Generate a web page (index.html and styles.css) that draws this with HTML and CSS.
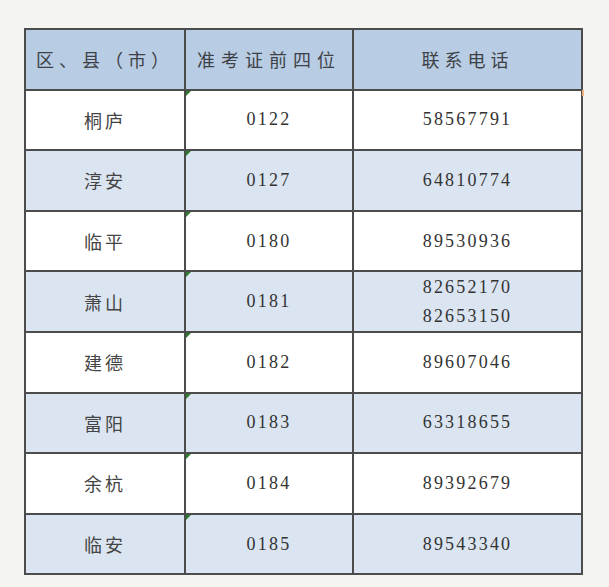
FILE: index.html
```html
<!DOCTYPE html>
<html lang="zh">
<head>
<meta charset="utf-8">
<link rel="stylesheet" href="styles.css">
</head>
<body>
<div class="page">
  <table class="grid">
    <colgroup><col class="c1"><col class="c2"><col class="c3"></colgroup>
    <thead>
      <tr class="head"><th>区、县（市）</th><th class="wide">准考证前四位</th><th>联系电话</th></tr>
    </thead>
    <tbody>
      <tr><td class="cn">桐庐</td><td class="num mark">0122</td><td class="num">58567791</td></tr>
      <tr class="alt"><td class="cn">淳安</td><td class="num mark">0127</td><td class="num">64810774</td></tr>
      <tr><td class="cn">临平</td><td class="num mark">0180</td><td class="num">89530936</td></tr>
      <tr class="alt"><td class="cn">萧山</td><td class="num mark">0181</td><td class="num two">82652170<br>82653150</td></tr>
      <tr><td class="cn">建德</td><td class="num mark">0182</td><td class="num">89607046</td></tr>
      <tr class="alt"><td class="cn">富阳</td><td class="num mark">0183</td><td class="num">63318655</td></tr>
      <tr><td class="cn">余杭</td><td class="num mark">0184</td><td class="num">89392679</td></tr>
      <tr class="alt"><td class="cn">临安</td><td class="num mark">0185</td><td class="num">89543340</td></tr>
    </tbody>
  </table>
  <span class="edge"></span>
</div>
</body>
</html>
```
FILE: styles.css
```css
html, body {
  margin: 0;
  padding: 0;
  background: #f3f3f1;
}
.page {
  position: relative;
  width: 609px;
  height: 587px;
  padding: 28px 0 0 24px;
  box-sizing: border-box;
  background: #f4f4f2;
}
.grid {
  border-collapse: collapse;
  width: 557px;
  table-layout: fixed;
  color: #3c3c3c;
}
.c1 { width: 160px; }
.c2 { width: 168px; }
.c3 { width: 229px; }
.grid th, .grid td {
  border: 2px solid #4c4c4c;
  text-align: center;
  vertical-align: middle;
  padding: 0;
  height: 58.6px;
}
.grid tbody tr { background: #ffffff; }
.grid tbody tr.alt { background: #dbe5f1; }
.head { background: #b8cce4; }
.grid th {
  font-family: "Noto Sans CJK SC", "Noto Sans", sans-serif;
  font-weight: 400;
  font-size: 18px;
  letter-spacing: 5px;
  color: #3e4246;
}
.grid th.wide { letter-spacing: 6px; }
.cn {
  font-family: "Noto Sans CJK SC", "Noto Sans", sans-serif;
  font-size: 18px;
  letter-spacing: 3px;
  color: #444;
}
.num {
  font-family: "Liberation Serif", "Times New Roman", serif;
  font-size: 18px;
  letter-spacing: 2.2px;
  color: #333;
}
.two { line-height: 29px; }
.mark { position: relative; }
.mark::before {
  content: "";
  position: absolute;
  left: 0;
  top: 0;
  width: 0;
  height: 0;
  border-top: 5px solid #2d7a2d;
  border-right: 5px solid transparent;
}
.edge {
  position: absolute;
  left: 582px;
  top: 90px;
  width: 2px;
  height: 6px;
  background: #f0b080;
}
```
